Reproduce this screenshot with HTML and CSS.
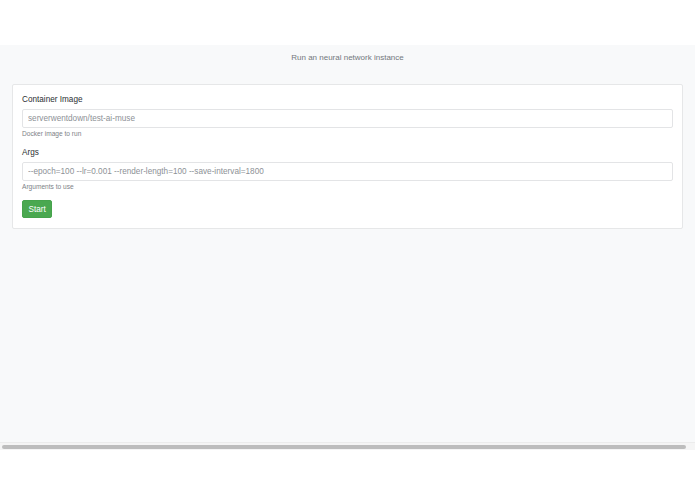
FILE: index.html
```html
<!DOCTYPE html>
<html lang="en">
<head>
  <meta charset="UTF-8">
  <meta name="viewport" content="width=device-width, initial-scale=1.0">
  <title>Run an neural network instance</title>
  <link rel="stylesheet" href="styles.css">
</head>
<body>

  <div class="topbar"></div>

  <div class="main">
    <p class="lead">Run an neural network instance</p>

    <div class="card">
      <form id="runForm">
        <div class="form-group">
          <label for="image">Container Image</label>
          <input type="text" id="image" class="form-control" placeholder="serverwentdown/test-ai-muse">
          <small class="form-text">Docker image to run</small>
        </div>

        <div class="form-group">
          <label for="args">Args</label>
          <input type="text" id="args" class="form-control" placeholder="--epoch=100 --lr=0.001 --render-length=100 --save-interval=1800">
          <small class="form-text">Arguments to use</small>
        </div>

        <button type="button" class="btn-success">Start</button>
      </form>
    </div>
  </div>

  <div class="scrollbar">
    <div class="scrollbar-thumb"></div>
  </div>

</body>
</html>
```

FILE: styles.css
```css
body {
  margin: 0;
  font-family: 'Liberation Sans', Arial, sans-serif;
  font-size: 8.2px;
  color: #2b2f33;
  background-color: #fff;
}
.topbar {
  height: 45px;
  background-color: #fff;
}
.main {
  height: 397px;
  box-sizing: border-box;
  padding: 7px 12px 0;
  background-color: #f8f9fa;
}
.lead {
  margin: 0 0 20px;
  font-size: 8px;
  text-align: center;
  line-height: 12px;
  color: #73787d;
}
.card {
  padding: 9px 9px 10px;
  background: white;
  border: 1px solid #e6e7e8;
  border-radius: 2px;
}
.form-group {
  margin-bottom: 9px;
}
label {
  display: block;
  line-height: 12px;
  margin-bottom: 3px;
}
.form-control {
  display: block;
  width: 100%;
  height: 19px;
  box-sizing: border-box;
  padding: 0 5px;
  font-family: inherit;
  font-size: 8.2px;
  color: #495057;
  border: 1px solid #e3e4e6;
  border-radius: 2px;
  background: white;
}
.form-control::placeholder {
  color: #8d9196;
}
.form-text {
  display: block;
  margin-top: 2px;
  font-size: 6.6px;
  line-height: 8px;
  color: #7d8287;
}
.btn-success {
  display: block;
  height: 18px;
  margin-top: 8px;
  padding: 0 5.5px;
  font-family: inherit;
  font-size: 8.2px;
  color: white;
  background-color: #4aa850;
  border: 1px solid #46a34c;
  border-radius: 2px;
  cursor: pointer;
}
.scrollbar {
  height: 8px;
  box-sizing: border-box;
  padding: 2px 9px 0 2px;
  background-color: #f5f5f5;
  border-top: 1px solid #ececec;
}
.scrollbar-thumb {
  height: 4px;
  border-radius: 2px;
  background-color: #bdbdbd;
}
```
